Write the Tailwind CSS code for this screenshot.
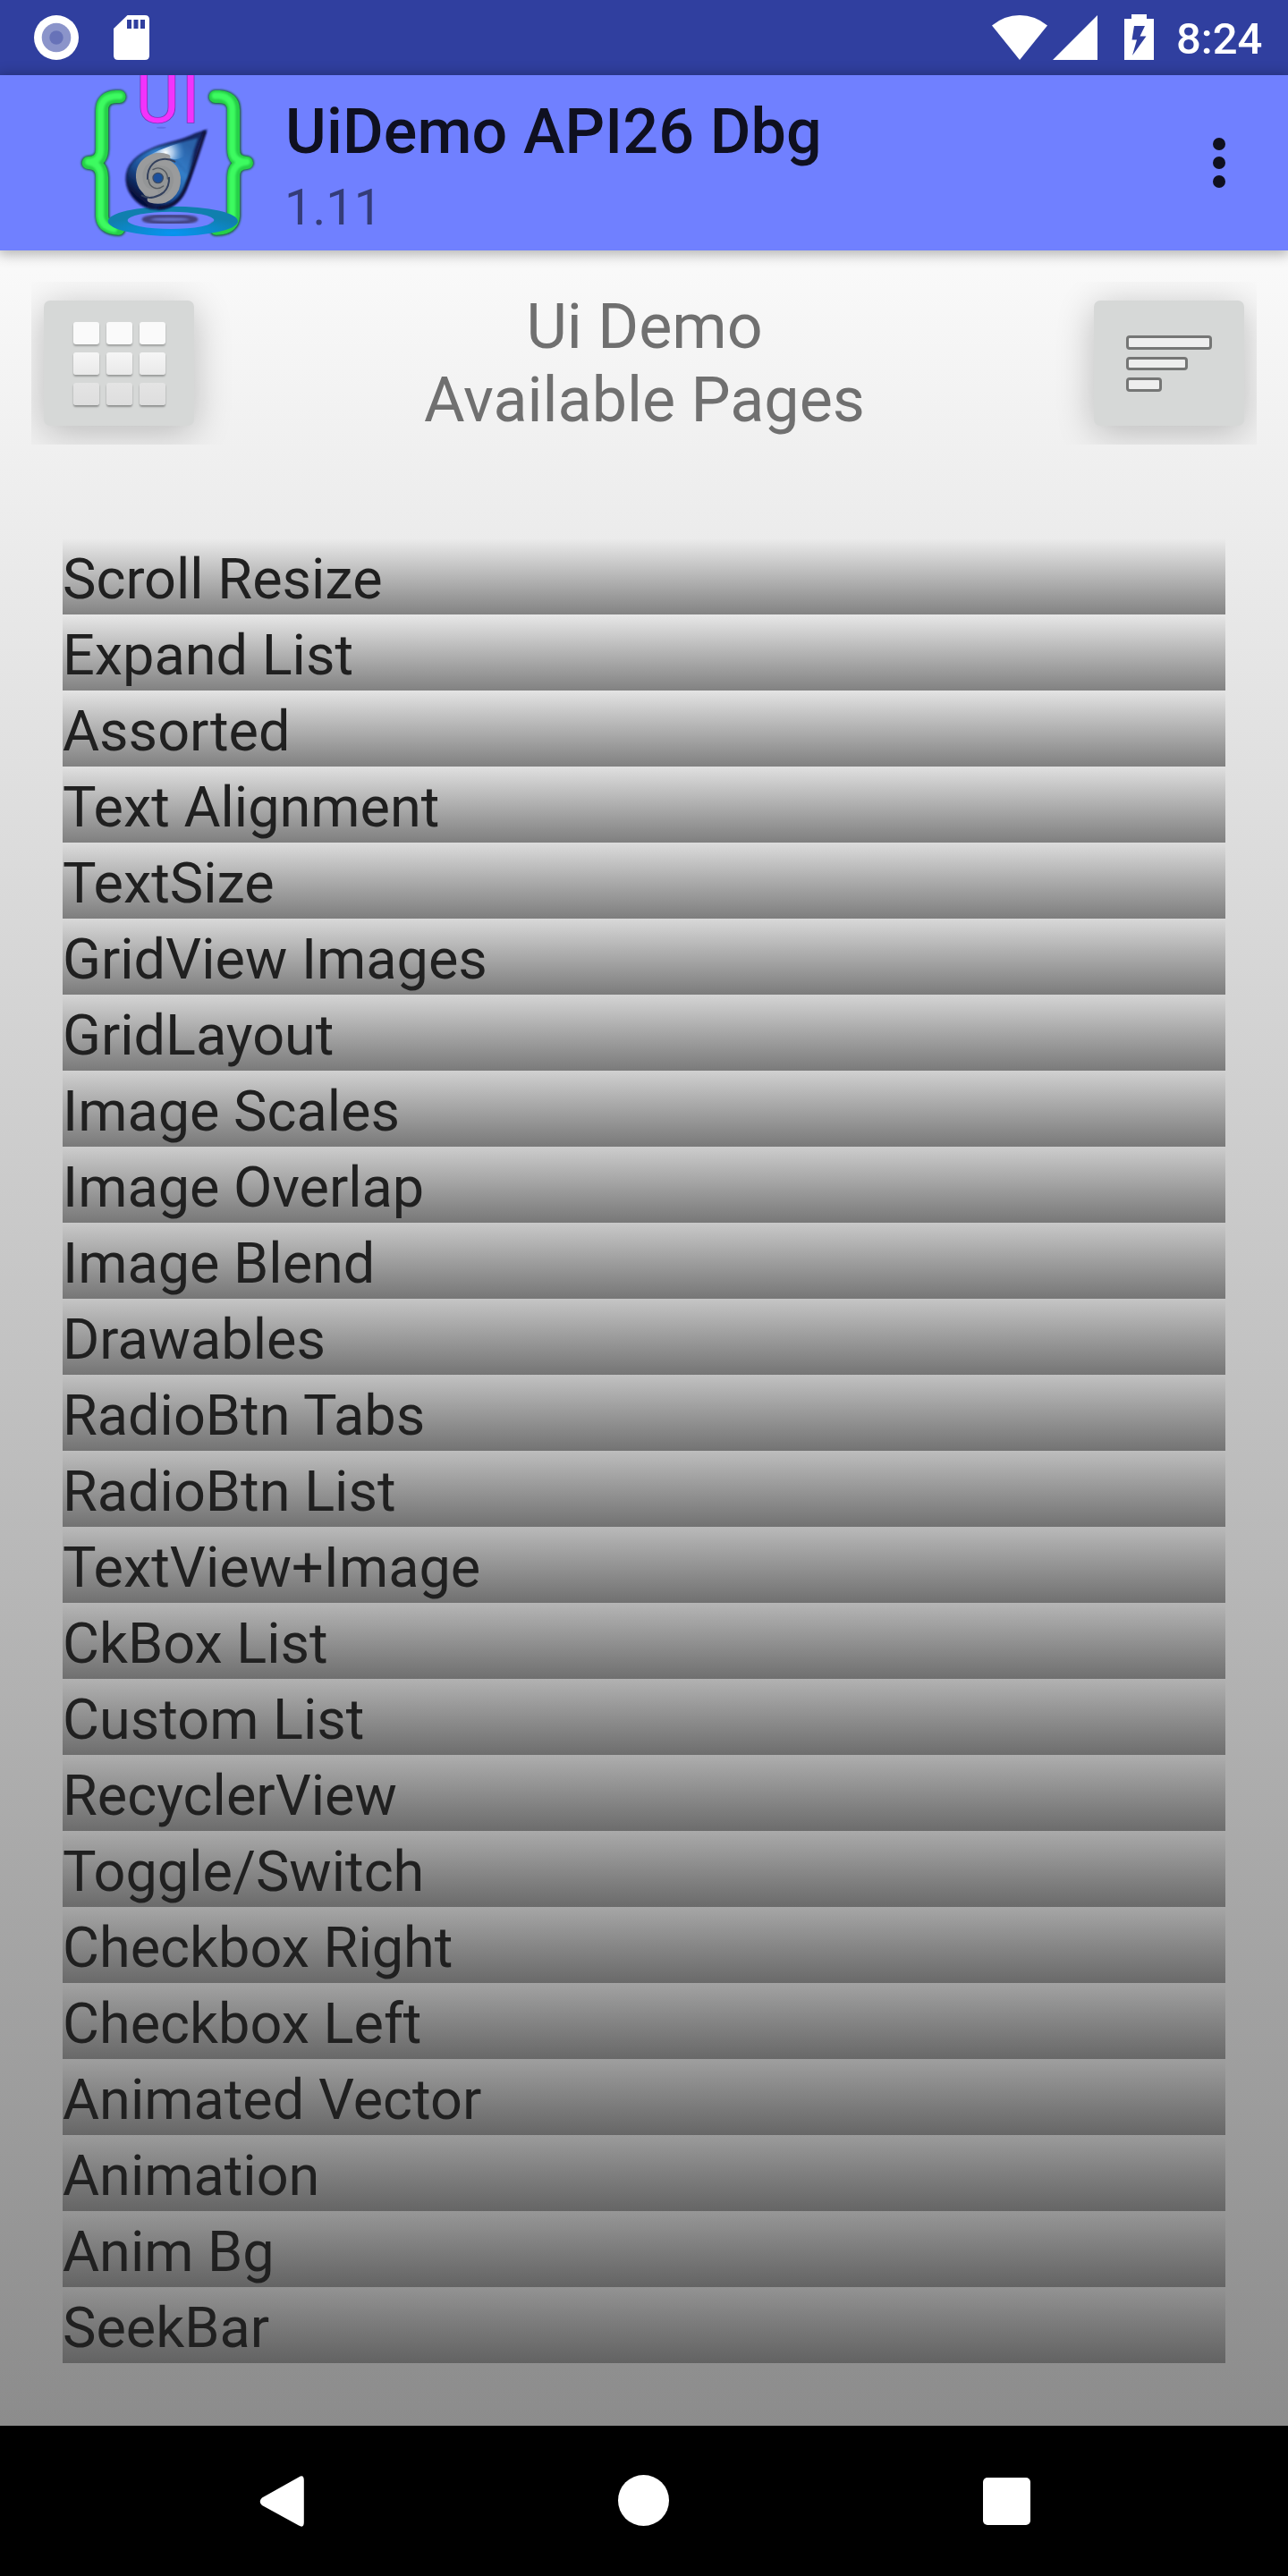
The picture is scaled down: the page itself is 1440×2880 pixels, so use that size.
<!DOCTYPE html>
<html lang="en">
<head>
<meta charset="utf-8">
<title>UiDemo</title>
<script src="https://cdn.jsdelivr.net/npm/@tailwindcss/browser@4"></script>
</head>
<body class="w-[1440px] h-[2880px] overflow-hidden flex flex-col font-['Roboto',sans-serif] bg-black">

<!-- status bar -->
<div class="h-[84px] shrink-0 bg-[#303f9f] flex items-start pl-[38px] pr-[27px]">
  <svg class="mt-[17px] w-[50px] h-[50px]" viewBox="0 0 50 50"><circle cx="25" cy="25" r="25" fill="#fff"/><circle cx="25" cy="25" r="16.3" fill="#8b94ca"/><circle cx="25" cy="25" r="7.7" fill="#6772b8"/></svg>
  <svg class="mt-[17px] ml-[39px] w-[40px] h-[50px]" viewBox="0 0 40 50"><path d="M15.500 0H35Q40 0 40 5V45Q40 50 35 50H5Q0 50 0 45V15Z" fill="#fff"/><path d="M15 5h5v10h-5zM22.500 5h5v10h-5zM30 5h5v10h-5z" fill="#303f9f"/></svg>
  <div class="grow"></div>
  <svg class="mt-[17px] w-[62px] h-[50px]" viewBox="0 0 62 50"><path d="M31 50L0 11.500Q14 0 31 0T62 11.500Z" fill="#fff"/></svg>
  <svg class="mt-[17px] ml-[6px] w-[50px] h-[50px]" viewBox="0 0 50 50"><path d="M0 50L50 0V50Z" fill="#fff"/></svg>
  <svg class="mt-[16px] ml-[30px] w-[33px] h-[51px]" viewBox="0 0 33 51"><path d="M8 0H25V5H33V51H0V5H8Z" fill="#fff"/><path d="M11 13H23L17.500 24.500H24.500L9 46L14 28.500H8.500Z" fill="#303f9f"/></svg>
  <div class="ml-[25px] w-[98px] h-[84px] leading-[87px] text-[49px] font-medium text-white whitespace-nowrap">8:24</div>
</div>

<!-- app bar -->
<header class="relative z-10 h-[196px] shrink-0 bg-[#7080ff] shadow-[0_2px_14px_2px_rgba(0,0,0,0.3)] flex items-start pl-[70px] pr-[70px]">
  <svg class="w-[230px] h-[196px] shrink-0" viewBox="0 42 690 588">
    <defs>
      <linearGradient id="drop" x1="0.2" y1="0.9" x2="0.8" y2="0.2"><stop offset="0" stop-color="#06103a"/><stop offset="0.3" stop-color="#1d4f95"/><stop offset="0.65" stop-color="#347fca"/><stop offset="1" stop-color="#172a66"/></linearGradient>
      <radialGradient id="shine" cx="345" cy="302" r="65" gradientUnits="userSpaceOnUse"><stop offset="0" stop-color="#fff"/><stop offset="0.4" stop-color="#c3daf3" stop-opacity="0.8"/><stop offset="1" stop-color="#5d9cdd" stop-opacity="0"/></radialGradient>
      <radialGradient id="ring" cx="0.5" cy="0.9" r="0.6"><stop offset="0" stop-color="#0794f2"/><stop offset="1" stop-color="#107fae"/></radialGradient>
      <filter id="soft" x="-10%" y="-10%" width="120%" height="120%"><feGaussianBlur stdDeviation="2.500"/></filter>
    </defs>
    <g fill="none" stroke-linecap="round" stroke-linejoin="round">
      <g stroke="#17602e" stroke-width="48" filter="url(#soft)">
        <path d="M191 115H180Q133 117 133 160V290Q132 335 86 336Q132 338 133 385V515Q135 557 188 558"/>
        <path d="M512 115H525Q574 117 574 160V290Q574 335 618 336Q574 338 574 385V515Q571 558 515 558"/>
      </g>
      <g stroke="#26cf48" stroke-width="42">
        <path d="M191 114H180Q132 116 132 160V290Q132 335 86 336Q132 338 132 385V515Q134 556 188 557"/>
        <path d="M512 114H525Q573 116 573 160V290Q573 335 618 336Q573 338 573 385V515Q571 556 515 557"/>
      </g>
      <g stroke="#3cfb60" stroke-width="22" filter="url(#soft)">
        <path d="M192 112H178Q128 116 128 160V290Q128 332 86 333Q128 338 128 385V515Q130 550 172 558"/>
        <path d="M511 111H525Q569 116 569 160V290Q569 332 618 333Q569 338 569 385V515"/>
      </g>
    </g>
    <text x="247" y="202" font-family="Roboto, sans-serif" font-size="222" letter-spacing="8" fill="#f233fb" stroke="#7a35b8" stroke-width="5" paint-order="stroke">UI</text>
    <ellipse cx="331" cy="218" rx="16" ry="3" fill="#5361d8" opacity="0.6"/>
    <path fill-rule="evenodd" d="M152 532A218 50 0 1 0 588 532A218 50 0 1 0 152 532ZM218 529A145 29 0 1 1 508 529A145 29 0 1 1 218 529Z" fill="url(#ring)"/>
    <ellipse cx="360" cy="526" rx="88" ry="11" fill="#6a78d8" stroke="#43427f" stroke-width="13" filter="url(#soft)"/>
    <path d="M480 228Q460 256 446 312C428 385 414 430 384 464C350 500 285 500 247 463C206 424 202 365 240 327C270 297 315 282 362 269Q420 253 446 239Z" fill="url(#drop)" stroke="#0b1447" stroke-width="5" filter="url(#soft)"/>
    <path d="M454 253Q430 325 416 365Q398 340 378 325L300 305Q360 275 454 253Z" fill="#347fca" opacity="0.65" filter="url(#soft)"/>
    <path d="M454 253Q425 320 378 325L290 310Q360 275 454 253Z" fill="url(#shine)"/>
    <path d="M478 230Q440 350 414 416Q390 485 320 487" fill="none" stroke="#080f35" stroke-width="11" filter="url(#soft)"/>
    <ellipse cx="320" cy="389" rx="66" ry="76" fill="#939596"/>
    <g fill="none" stroke-linecap="round">
      <path d="M350 318C310 303 254 330 257 385C260 425 285 436 310 437" stroke="#9a9b9c" stroke-width="22"/>
      <path d="M296 458C348 473 387 435 384 386C378 345 350 332 325 334" stroke="#9a9b9c" stroke-width="24"/>
      <path d="M376 332C350 318 320 322 302 340C288 354 284 372 285 390" stroke="#33405c" stroke-width="6"/>
      <path d="M266 446C290 460 322 450 340 434C354 420 358 404 357 386" stroke="#33405c" stroke-width="6"/>
      <path d="M303 359C325 345 353 362 352 390" stroke="#55595f" stroke-width="4"/>
      <path d="M288 392C290 420 318 430 338 414" stroke="#55595f" stroke-width="4"/>
    </g>
    <circle cx="320" cy="387" r="17" fill="#1c4f9b" stroke="#3d4c64" stroke-width="4"/>
  </svg>
  <div class="ml-[18px] pt-[22px] grow whitespace-nowrap">
    <div class="h-[82px] pl-px leading-[83px] text-[70px] tracking-[0.150px] font-medium text-[#0f1020]">UiDemo API26 Dbg</div>
    <div class="h-[66px] leading-[88px] text-[56px] text-[#343c77]">1.11</div>
  </div>
  <svg class="mt-[70px] w-[14px] h-[56px]" viewBox="0 0 14 56" fill="#0f1020"><circle cx="7" cy="7" r="7"/><circle cx="7" cy="28" r="7"/><circle cx="7" cy="49" r="7"/></svg>
</header>

<main class="h-[2432px] shrink-0 bg-linear-to-b/srgb from-[#fafafa] to-[#8c8c8c] flex flex-col px-[35px] pt-[35px]">
  <div class="flex justify-between h-[182px]">
    <!-- grid button -->
    <div class="w-[240px] h-[182px] overflow-hidden pl-[14px] pt-[21px]">
      <div class="w-[168px] h-[140px] rounded-[7px] bg-[#d6d8d7] shadow-[0_7px_42px_rgba(0,0,0,0.24)] pl-[33px] pt-[24px]">
        <div class="grid grid-cols-3 gap-x-[8px] gap-y-[9px] w-[103px]">
          <i class="h-[25px] rounded-[3px] bg-[#fafafa] shadow-[0_2px_2px_rgba(0,0,0,0.25)]"></i><i class="h-[25px] rounded-[3px] bg-[#fafafa] shadow-[0_2px_2px_rgba(0,0,0,0.25)]"></i><i class="h-[25px] rounded-[3px] bg-[#fafafa] shadow-[0_2px_2px_rgba(0,0,0,0.25)]"></i>
          <i class="h-[25px] rounded-[3px] bg-linear-to-b from-[#f6f6f6] to-[#e9e9e9] shadow-[0_2px_2px_rgba(0,0,0,0.28)]"></i><i class="h-[25px] rounded-[3px] bg-linear-to-b from-[#f6f6f6] to-[#e9e9e9] shadow-[0_2px_2px_rgba(0,0,0,0.28)]"></i><i class="h-[25px] rounded-[3px] bg-linear-to-b from-[#f6f6f6] to-[#e9e9e9] shadow-[0_2px_2px_rgba(0,0,0,0.28)]"></i>
          <i class="h-[25px] rounded-[3px] bg-linear-to-b from-[#e4e4e4] to-[#dedede] shadow-[0_2px_2px_rgba(0,0,0,0.33)]"></i><i class="h-[25px] rounded-[3px] bg-linear-to-b from-[#e4e4e4] to-[#dedede] shadow-[0_2px_2px_rgba(0,0,0,0.33)]"></i><i class="h-[25px] rounded-[3px] bg-linear-to-b from-[#e4e4e4] to-[#dedede] shadow-[0_2px_2px_rgba(0,0,0,0.33)]"></i>
        </div>
      </div>
    </div>
    <h1 class="pt-[9px] pl-px text-center text-[70px] leading-[82px] text-[#707070] whitespace-nowrap">Ui Demo<br>Available Pages</h1>
    <!-- list button -->
    <div class="w-[240px] h-[182px] overflow-hidden pl-[58px] pt-[21px]">
      <div class="w-[168px] h-[140px] rounded-[7px] bg-[#d6d8d7] shadow-[0_7px_42px_rgba(0,0,0,0.24)] pl-[36px] pt-[39px] flex flex-col gap-[8px]">
        <i class="w-[96px] h-[15.500px] rounded-[4px] border-[3px] border-[#757675] bg-[#eee]"></i>
        <i class="w-[69px] h-[15.500px] rounded-[4px] border-[3px] border-[#757675] bg-[#eee]"></i>
        <i class="w-[40px] h-[15.500px] rounded-[4px] border-[3px] border-[#757675] bg-[#eee]"></i>
      </div>
    </div>
  </div>

  <ul id="pages" class="mt-[105px] mx-[35px] text-[63px] text-[#202020] whitespace-nowrap"></ul>
</main>

<nav class="h-[168px] shrink-0 bg-black flex items-start pl-[290px]">
  <svg class="mt-[56px] w-[50px] h-[57px]" viewBox="0 0 50 57"><path d="M44 1.500Q49.800-2 49.800 5V52Q49.800 59 44 55.500L3 33Q-1.500 29 3 24.500Z" fill="#fff"/></svg>
  <div class="mt-[55px] ml-[351px] w-[57px] h-[57px] rounded-full bg-white"></div>
  <div class="mt-[58px] ml-[351px] w-[53px] h-[53px] rounded-[5px] bg-white"></div>
</nav>

<script>
const pages = ["Scroll Resize","Expand List","Assorted","Text Alignment","TextSize","GridView Images","GridLayout","Image Scales","Image Overlap","Image Blend","Drawables","RadioBtn Tabs","RadioBtn List","TextView+Image","CkBox List","Custom List","RecyclerView","Toggle/Switch","Checkbox Right","Checkbox Left","Animated Vector","Animation","Anim Bg","SeekBar"];
document.getElementById("pages").innerHTML = pages.map(p => `<li class="h-[85px] pt-[6px] leading-[79px] bg-linear-to-b/srgb from-[#484848]/0 to-[#484848]/63">${p}</li>`).join("");
</script>
</body>
</html>
